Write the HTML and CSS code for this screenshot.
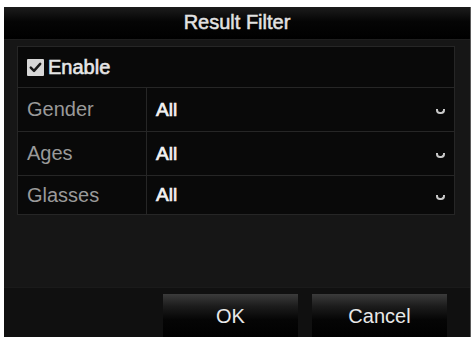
FILE: index.html
```html
<!DOCTYPE html>
<html>
<head>
<meta charset="utf-8">
<link rel="stylesheet" href="styles.css">
</head>
<body>
<div class="dialog">
  <div class="title">Result Filter</div>
  <div class="content">
    <div class="panel">
      <div class="enable-row">
        <span class="checkbox">
          <svg width="17" height="17" viewBox="0 0 17 17"><rect x="0" y="0" width="17" height="17" rx="1" fill="#d8d8d8"/><path d="M3.8 8.7 L7 11.8 L13.2 4.9" stroke="#1a1a1a" stroke-width="2.5" fill="none" stroke-linecap="round" stroke-linejoin="round"/></svg>
        </span>
        <span class="enable-label">Enable</span>
      </div>
      <div class="row">
        <div class="label">Gender</div>
        <div class="value"><span>All</span><span class="chev"></span></div>
      </div>
      <div class="row">
        <div class="label">Ages</div>
        <div class="value"><span>All</span><span class="chev"></span></div>
      </div>
      <div class="row last">
        <div class="label">Glasses</div>
        <div class="value"><span>All</span><span class="chev"></span></div>
      </div>
    </div>
  </div>
  <div class="footer">
    <button class="btn">OK</button>
    <button class="btn">Cancel</button>
  </div>
</div>
</body>
</html>
```
FILE: styles.css
```css
html, body {
  margin: 0;
  padding: 0;
  background: #ffffff;
  width: 473px;
  height: 337px;
  overflow: hidden;
}
.dialog {
  margin: 7px 2px 0 4px;
  width: 466px;
  height: 330px;
  background: #161616;
  border-right: 1px solid #5a5a5a;
  display: flex;
  flex-direction: column;
  font-family: "Liberation Sans", Arial, sans-serif;
}
.title {
  height: 33px;
  flex: none;
  background: linear-gradient(#1c1c1c 0%, #050505 45%, #000 100%);
  color: #e2e2e2;
  font-size: 20px;
  -webkit-text-stroke: 0.5px #e2e2e2;
  display: flex;
  align-items: center;
  justify-content: center;
  padding-bottom: 1px;
  box-sizing: border-box;
  border-bottom: 1px solid #1e1e1e;
}
.content {
  padding: 6px 15px 0 13px;
  height: 247px;
  box-sizing: border-box;
  flex: none;
}
.panel {
  border: 1px solid #262626;
  background: #090909;
  height: 169px;
  box-sizing: border-box;
  display: flex;
  flex-direction: column;
}
.enable-row {
  height: 40px;
  border-bottom: 1px solid #262626;
  display: flex;
  align-items: center;
  padding-left: 9px;
  gap: 4px;
  flex: none;
}
.checkbox {
  width: 17px;
  height: 17px;
  display: block;
  margin-top: 1px;
}
.checkbox svg { display: block; }
.enable-label {
  color: #e6e6e6;
  font-size: 20px;
  -webkit-text-stroke: 0.6px #e6e6e6;
}
.row {
  display: grid;
  grid-template-columns: 129px 1fr;
  height: 43px;
  border-bottom: 1px solid #262626;
  flex: none;
}
.row.last {
  border-bottom: none;
  flex: 1;
}
.label {
  border-right: 1px solid #262626;
  color: #9a9a9a;
  font-size: 20px;
  display: flex;
  align-items: center;
  padding-left: 9px;
}
.value {
  color: #f2f2f2;
  font-size: 19px;
  -webkit-text-stroke: 0.7px #f2f2f2;
  display: flex;
  align-items: center;
  justify-content: space-between;
  padding-left: 9px;
  padding-right: 9px;
}
.chev {
  width: 5px;
  height: 3px;
  border: 2px solid #c8c8c8;
  border-top: none;
  border-radius: 0 0 4px 4px;
  margin-top: 4px;
}
.footer {
  flex: 1;
  background: #101010;
  display: flex;
  justify-content: flex-end;
  align-items: flex-start;
  gap: 14px;
  padding: 6px 23px 0 0;
  box-sizing: border-box;
  border-top: 1px solid #1a1a1a;
}
.btn {
  width: 135px;
  height: 46px;
  border: none;
  border-top: 1px solid #3a3a3a;
  background: linear-gradient(#383838 0%, #1c1c1c 25%, #050505 55%, #000 100%);
  color: #e8e8e8;
  font-family: "Liberation Sans", Arial, sans-serif;
  font-size: 20px;
  padding: 0 0 3px 0;
  margin: 0;
}
```
